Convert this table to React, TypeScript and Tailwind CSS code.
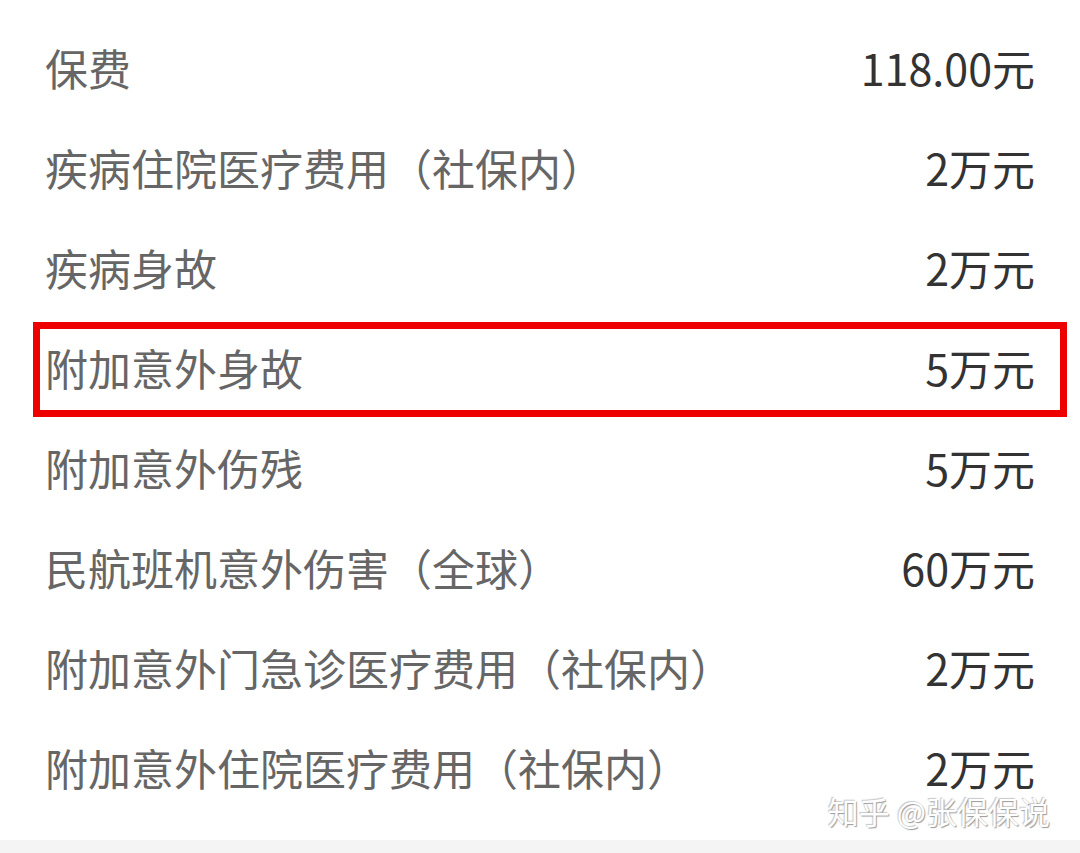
const rows: { label: string; value: string; highlight?: boolean }[] = [
  { label: '保费', value: '118.00元' },
  { label: '疾病住院医疗费用（社保内）', value: '2万元' },
  { label: '疾病身故', value: '2万元' },
  { label: '附加意外身故', value: '5万元', highlight: true },
  { label: '附加意外伤残', value: '5万元' },
  { label: '民航班机意外伤害（全球）', value: '60万元' },
  { label: '附加意外门急诊医疗费用（社保内）', value: '2万元' },
  { label: '附加意外住院医疗费用（社保内）', value: '2万元' },
]

export default function App() {
  return (
    <div
      className="relative flex h-[853px] w-[1080px] flex-col bg-white"
      style={{ fontFamily: '"Noto Sans CJK SC", "Noto Sans", sans-serif' }}
    >
      <div className="flex flex-1 flex-col pt-[17px]">
        {rows.map((row) =>
          row.highlight ? (
            <div
              key={row.label}
              className="ml-[33px] mr-[13px] mt-[5px] flex h-[95px] items-center justify-between border-[7px] border-[#ee0000] pb-[5px] pl-[5px] pr-[25px]"
            >
              <div className="text-[43px] leading-none text-[#666666]">{row.label}</div>
              <div className="text-[43px] leading-none text-[#333333]">{row.value}</div>
            </div>
          ) : (
            <div key={row.label} className="flex h-[100px] items-center justify-between px-[45px]">
              <div className="text-[43px] leading-none text-[#666666]">{row.label}</div>
              <div className="text-[43px] leading-none text-[#333333]">{row.value}</div>
            </div>
          )
        )}
      </div>
      <div className="h-[13px] bg-[#f4f4f4]" />
      <div
        className="absolute right-[30px] top-[795px] text-[31px] leading-none text-white"
        style={{ textShadow: '1px 1px 1px #9a9a9a, -1px -1px 1px #c8c8c8' }}
      >
        知乎 @张保保说
      </div>
    </div>
  )
}
